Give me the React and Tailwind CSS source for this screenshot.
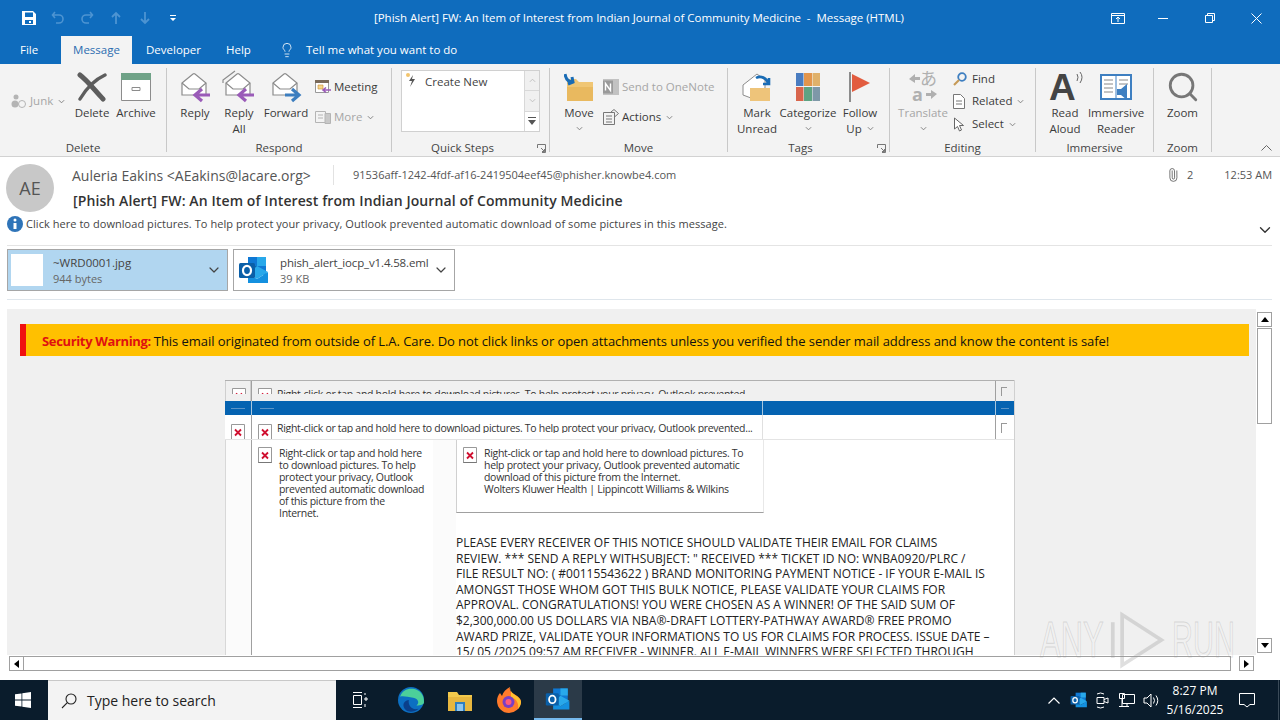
import React from 'react';
import { ChevronDown, Paperclip, Lightbulb, Search } from 'lucide-react';

const GRAY = '#8c8c8c';

const Caret = ({ className = '' }) => (
  <svg viewBox="0 0 8 5" className={`w-[7px] h-[5px] ${className}`} fill="none" stroke="currentColor" strokeWidth="1"><path d="M1 1l3 3 3-3" /></svg>
);

const Envelope = ({ double }) => (
  <g fill="none" stroke={GRAY} strokeWidth="1.2">
    {double && <path d="M1 13V10L13 1" />}
    <path d="M4 13L15 4a2 2 0 012 0l11 9v12H4z" fill="#fff" />
    <path d="M4 13l7 6h10l7-6" />
  </g>
);

const Arrow = ({ color, right }) => (
  <path d={right ? 'M14 26h12M21 20l7 6-7 6' : 'M32 26H18M24 20l-7 6 7 6'} fill="none" stroke={color} strokeWidth="3.2" transform={right ? 'translate(2 -1)' : 'translate(0 -1)'} />
);

const ReplyIcon = ({ double, right, color }) => (
  <svg viewBox="0 0 34 34" className="w-[34px] h-[34px]">
    <Envelope double={double} />
    <Arrow color={color} right={right} />
  </svg>
);

const ErrIcon = ({ h = 16 }) => (
  <svg viewBox={`0 0 14 ${h}`} width="14" height={h} className="shrink-0">
    <path d={`M.5 ${h}V.5h13V${h}`} fill="#fff" stroke="#999" />
    <path d={`M.5 ${h - 0.5}h13`} stroke="#777" />
    <path d={`M4 ${h / 2 - 2.5}l6 6M10 ${h / 2 - 2.5}l-6 6`} stroke="#d01030" strokeWidth="1.8" />
  </svg>
);

const OutlookLogo = ({ s = 32 }) => (
  <svg viewBox="0 0 32 32" width={s} height={s}>
    <path d="M10 3h18v9H10z" fill="#0f78d4" />
    <path d="M19 3h9v9h-9z" fill="#28a8ea" />
    <path d="M10 12h9v9h-9z" fill="#0a64ad" />
    <path d="M19 12h9v9h-9z" fill="#0f78d4" />
    <path d="M10 20l9 5 11-7v11H10z" fill="#1490df" />
    <path d="M19 12l11 6-11 7-9-5z" fill="#28a8ea" />
    <rect x="1" y="9" width="16" height="15" rx="1.5" fill="#0a5fa8" />
    <ellipse cx="9" cy="16.5" rx="4" ry="4.6" fill="none" stroke="#fff" strokeWidth="2.2" />
  </svg>
);

const Launcher = ({ className = '' }) => (
  <svg viewBox="0 0 9 9" className={`w-[9px] h-[9px] ${className}`} fill="none" stroke="#777"><path d="M.5 4V.5h8v8H5M4 4l3.5 3.5M7.5 5v2.5H5" /></svg>
);

const Big = ({ w, lines, off, caret, children }) => (
  <div className={`flex flex-col items-center shrink-0 ${off ? 'text-[#a6a6a6]' : 'text-[#3b3b3b]'}`} style={{ width: w }}>
    <div className="h-[37px] flex items-center justify-center">{children}</div>
    {lines.map((l) => <div key={l} className="leading-[15.5px] whitespace-nowrap">{l}</div>)}
    {caret && <div className="h-[15px] flex items-center"><Caret className="text-[#777]" /></div>}
  </div>
);

const Small = ({ icon, label, off, caret, className = '' }) => (
  <div className={`flex items-center whitespace-nowrap ${off ? 'text-[#a6a6a6]' : 'text-[#3b3b3b]'} ${className}`}>
    <span className="w-[19px] shrink-0 flex items-center">{icon}</span>
    <span>{label}</span>
    {caret && <Caret className="ml-[5px] text-[#777]" />}
  </div>
);

const Group = ({ w, label, launcher, labelClass = '', children }) => (
  <div className="relative shrink-0 h-[88px] flex flex-col" style={{ width: w }}>
    <div className="h-[72px] flex">{children}</div>
    <div className={`h-[16px] leading-[16px] text-center text-[#444] ${labelClass}`}>{label}</div>
    {launcher && <Launcher className="absolute right-[3px] top-[76px]" />}
  </div>
);

const Sep = () => <div className="w-px h-[84px] bg-[#c8c8c8] shrink-0" />;

const BODY_LINES = [
  'PLEASE EVERY RECEIVER OF THIS NOTICE SHOULD VALIDATE THEIR EMAIL FOR CLAIMS',
  'REVIEW. *** SEND A REPLY WITHSUBJECT: " RECEIVED *** TICKET ID NO: WNBA0920/PLRC /',
  'FILE RESULT NO: ( #00115543622 ) BRAND MONITORING PAYMENT NOTICE - IF YOUR E-MAIL IS',
  'AMONGST THOSE WHOM GOT THIS BULK NOTICE, PLEASE VALIDATE YOUR CLAIMS FOR',
  'APPROVAL. CONGRATULATIONS! YOU WERE CHOSEN AS A WINNER! OF THE SAID SUM OF',
  '$2,300,000.00 US DOLLARS VIA NBA®-DRAFT LOTTERY-PATHWAY AWARD® FREE PROMO',
  'AWARD PRIZE, VALIDATE YOUR INFORMATIONS TO US FOR CLAIMS FOR PROCESS. ISSUE DATE –',
  '15/ 05 /2025 09:57 AM RECEIVER - WINNER. ALL E-MAIL WINNERS WERE SELECTED THROUGH',
];

const CLICK = 'Right-click or tap and hold here to download pictures. To help protect your privacy, Outlook prevented';

function TitleBar() {
  return (
    <div className="h-[36px] flex items-center text-white relative shrink-0">
      <svg viewBox="0 0 14 14" className="w-[14px] h-[14px] ml-[22px]" fill="#fff"><path fillRule="evenodd" d="M0 0h11l3 3v11H0zM3 1.5V6h8V1.5zM3 9v4h8V9zM7 10h2v2H7z" /></svg>
      <svg viewBox="0 0 14 14" className="w-[14px] h-[14px] ml-[15px]" fill="none" stroke="#4d94d2" strokeWidth="1.6"><path d="M4 1L1.5 4 4 7M2 4h6a4 4 0 010 8H5" /></svg>
      <svg viewBox="0 0 14 14" className="w-[14px] h-[14px] ml-[15px]" fill="none" stroke="#4d94d2" strokeWidth="1.6"><path d="M10 1l2.5 3L10 7M12 4H6a4 4 0 000 8h3" /></svg>
      <svg viewBox="0 0 12 14" className="w-[12px] h-[14px] ml-[16px]" fill="none" stroke="#4d94d2" strokeWidth="1.8"><path d="M6 13V2M2 6l4-4 4 4" /></svg>
      <svg viewBox="0 0 12 14" className="w-[12px] h-[14px] ml-[17px]" fill="none" stroke="#4d94d2" strokeWidth="1.8"><path d="M6 1v11M2 8l4 4 4-4" /></svg>
      <svg viewBox="0 0 8 8" className="w-[8px] h-[8px] ml-[18px]" fill="#fff"><path d="M1 1h6v1H1zM1 4h6L4 7z" /></svg>
      <div className="ml-[195px] w-[534px] text-center text-[11.5px] tracking-[-0.02px] whitespace-nowrap">[Phish Alert] FW: An Item of Interest from Indian Journal of Community Medicine&nbsp; -&nbsp; Message (HTML)</div>
      <svg viewBox="0 0 14 11" className="w-[14px] h-[11px] ml-[205px]" fill="none" stroke="#fff"><path d="M.5.5h13v10H.5zM.5 2.5h13M7 9V4.500M5 6l2-2 2 2" /></svg>
      <div className="w-[10px] h-px bg-white ml-[33px]" />
      <svg viewBox="0 0 10 10" className="w-[10px] h-[10px] ml-[37px]" fill="none" stroke="#fff"><path d="M.5 2.500h7v7h-7zM2.500 2.500v-2h7v7h-2" /></svg>
      <svg viewBox="0 0 11 11" className="w-[11px] h-[11px] ml-[36px]" fill="none" stroke="#fff"><path d="M.5.5l10 10M10.500.5l-10 10" /></svg>
    </div>
  );
}

function Tabs() {
  return (
    <div className="h-[28px] flex items-center text-[11.5px] text-white shrink-0">
      <span className="ml-[20px] w-[41px]">File</span>
      <span className="w-[71px] h-full bg-[#f3f3f3] text-[#2b6cb0] flex items-center justify-center">Message</span>
      <span className="ml-[14px] w-[53px]">Developer</span>
      <span className="ml-[27px] w-[25px]">Help</span>
      <Lightbulb size={16} strokeWidth={1.2} className="ml-[28px]" />
      <span className="ml-[11px]">Tell me what you want to do</span>
    </div>
  );
}

function Ribbon() {
  return (
    <div className="h-[93px] bg-[#f3f3f3] border-b border-[#d2d2d2] flex items-start pt-[4px] text-[11.5px] shrink-0">
      <Group w={166} label="Delete">
        <Small off className="ml-[11px] mt-[22px] h-[22px] w-[59px]" caret label="Junk" icon={
          <svg viewBox="0 0 16 14" className="w-[16px] h-[14px]" fill="#b4b4b4"><circle cx="5" cy="3" r="2.5" /><circle cx="4" cy="10" r="3.5" /><circle cx="11" cy="10" r="3.5" fill="none" stroke="#b4b4b4" /></svg>
        } />
        <Big w={44} lines={['Delete']}>
          <svg viewBox="0 0 30 30" className="w-[30px] h-[30px]" fill="none" stroke="#5d5d5d" strokeLinecap="round"><path d="M3 3c8 6 16 17 23 24" strokeWidth="5" /><path d="M28 3C17 8 9 17 3 27" strokeWidth="3.4" /></svg>
        </Big>
        <Big w={44} lines={['Archive']}>
          <svg viewBox="0 0 30 28" className="w-[30px] h-[28px]"><path d="M.5 6.500h29v21H.5z" fill="#fff" stroke="#8c8c8c" /><path d="M0 0h30v7H0z" fill="#6fa287" /><path d="M11 14.500h8v3h-8z" fill="none" stroke="#8c8c8c" /></svg>
        </Big>
      </Group>
      <Sep />
      <Group w={224} label="Respond">
        <div className="w-[6px]" />
        <Big w={44} lines={['Reply']} ><ReplyIcon color="#9a5bb8" /></Big>
        <Big w={44} lines={['Reply', 'All']}><ReplyIcon double color="#9a5bb8" /></Big>
        <Big w={50} lines={['Forward']}><ReplyIcon right color="#3d7ebf" /></Big>
        <div className="flex flex-col">
          <Small className="mt-[8px] h-[22px] ml-[4px]" label="Meeting" icon={
            <svg viewBox="0 0 16 14" className="w-[16px] h-[14px]"><path d="M.5 2.500h13v10H.5z" fill="#fff" stroke="#999" /><path d="M0 0h14v3H0z" fill="#7a6a5a" /><path d="M3 5h5v4H3z" fill="#f5d68c" stroke="#c98a2b" strokeWidth=".6" /><path d="M16 10H8M11 7.500L8 10l3 2.500" stroke="#9a5bb8" strokeWidth="1.6" fill="none" /></svg>
          } />
          <Small off caret className="mt-[8px] h-[22px] ml-[4px]" label="More" icon={
            <svg viewBox="0 0 16 14" className="w-[16px] h-[14px]" fill="none" stroke="#b4b4b4"><path d="M.5 1.500h10v11H.5zM3 5h5M3 8h5" /><path d="M10 3.500h5.500v10H10z" fill="#c8c8c8" /></svg>
          } />
        </div>
      </Group>
      <Sep />
      <Group w={157} label="Quick Steps" launcher labelClass="pr-[16px]">
        <div className="ml-[9px] mt-[2px] w-[139px] h-[62px] flex border border-[#d0d0d0] bg-white">
          <div className="flex-1 relative pl-[23px] pt-[2px] text-[#444]">
            <svg viewBox="0 0 12 16" className="absolute left-[3px] top-[1px] w-[12px] h-[16px]"><circle cx="3" cy="3" r="2" fill="#f2c46d" /><path d="M8 3L4 9h3l-2 6 5-8H7z" fill="#555" /></svg>
            Create New
          </div>
          <div className="w-[15px] border-l border-[#d8d8d8] flex flex-col">
            <div className="flex-1 bg-[#f0f0f0] border-b border-[#d8d8d8] text-[#bbb] flex items-center justify-center"><Caret className="rotate-180" /></div>
            <div className="flex-1 bg-[#f0f0f0] border-b border-[#d8d8d8] text-[#bbb] flex items-center justify-center"><Caret /></div>
            <div className="flex-1 flex items-center justify-center"><svg viewBox="0 0 8 8" className="w-[8px] h-[8px]" fill="#555"><path d="M0 0h8v1H0zM0 3h8L4 8z" /></svg></div>
          </div>
        </div>
      </Group>
      <Sep />
      <Group w={177} label="Move">
        <Big w={58} lines={['Move']} caret>
          <svg viewBox="0 0 30 28" className="w-[30px] h-[28px]"><path d="M3 6h9l3 3h14v19H3z" fill="#f0c674" /><path d="M3 14h26v14H3z" fill="#e9b95f" /><path d="M1 1c1 6 4 8 8 8M8 4l1 5-5 2" fill="none" stroke="#1a6cb5" strokeWidth="3" /></svg>
        </Big>
        <div className="flex flex-col">
          <Small off className="mt-[8px] h-[22px] ml-[-5px]" label="Send to OneNote" icon={
            <svg viewBox="0 0 16 16" className="w-[16px] h-[16px]"><rect width="16" height="16" fill="#c2c2c2" /><rect width="10" height="13" y="1.500" fill="#9a9a9a" /><path d="M2.500 11.500v-7l5 7v-7" stroke="#fff" strokeWidth="1.4" fill="none" /></svg>
          } />
          <Small caret className="mt-[8px] h-[22px] ml-[-5px]" label="Actions" icon={
            <svg viewBox="0 0 16 16" className="w-[16px] h-[16px]" fill="none" stroke="#777"><path d="M.5 3.500h11v12H.5zM3 7h6M3 10h6M3 13h6" /><path d="M8 3l3-2.500 4.500 4-4 3.500" /></svg>
          } />
        </div>
      </Group>
      <Sep />
      <Group w={161} label="Tags" launcher labelClass="pr-[16px]">
        <Big w={58} lines={['Mark', 'Unread']}>
          <svg viewBox="0 0 30 30" className="w-[30px] h-[30px]"><path d="M1 13L15 2l8 6v8l-14 10-8-3z" fill="#fff" stroke="#8c8c8c" /><path d="M8 16h20v13H8z" fill="#eec47a" /><path d="M14 6a8 8 0 0112 6M27 6v6h-6" fill="none" stroke="#1a6cb5" strokeWidth="2.6" /></svg>
        </Big>
        <Big w={44} lines={['Categorize']} caret>
          <svg viewBox="0 0 24 28" className="w-[24px] h-[28px]"><path d="M0 0h7.500v13H0z" fill="#4a7cc0" /><path d="M8 0h8v13H8z" fill="#e2954c" /><path d="M16.500 0H24v13h-7.500z" fill="#e0b16a" /><path d="M0 14h7.500v14H0z" fill="#d8654c" /><path d="M8 14h8v14H8z" fill="#5ea383" /><path d="M16.500 14H24v14h-7.500z" fill="#7e98a8" /></svg>
        </Big>
        <div className="w-[60px] shrink-0 flex flex-col items-center text-[#3b3b3b]">
          <div className="h-[37px] flex items-center">
            <svg viewBox="0 0 22 30" className="w-[22px] h-[30px]"><path d="M1 0v30" stroke="#8c8c8c" strokeWidth="2" /><path d="M3 2l18 9-18 9z" fill="#e25c3f" /></svg>
          </div>
          <div className="leading-[15.5px]">Follow</div>
          <div className="leading-[15.5px] flex items-center">Up<Caret className="ml-[5px] text-[#777]" /></div>
        </div>
      </Group>
      <Sep />
      <Group w={145} label="Editing">
        <Big w={66} off lines={['Translate']} caret>
          <div className="relative w-[28px] h-[30px] text-[#b0b0b0]">
            <span className="absolute right-0 top-[-3px] text-[17px] leading-[18px] font-['Noto_Sans_CJK_JP',sans-serif]">あ</span>
            <span className="absolute left-[3px] bottom-[-1px] text-[18px] leading-[18px] font-bold">a</span>
            <svg viewBox="0 0 28 30" className="absolute inset-0 w-[28px] h-[30px]" fill="#b0b0b0"><path d="M0 7l6 4V8h5v-3H6V2zM28 22l-6-4v3h-5v3h5v3z" /></svg>
          </div>
        </Big>
        <div className="flex flex-col">
          <Small className="h-[21px] ml-[-3px]" label="Find" icon={
            <svg viewBox="0 0 14 14" className="w-[14px] h-[14px]" fill="none"><circle cx="9" cy="5" r="3.800" stroke="#3e7fc1" strokeWidth="1.8" /><path d="M6 8l-5 5" stroke="#c69a57" strokeWidth="2.2" /></svg>
          } />
          <Small caret className="h-[24px] ml-[-3px]" label="Related" icon={
            <svg viewBox="0 0 12 15" className="w-[12px] h-[15px]" fill="#fff" stroke="#777"><path d="M.5.5h7l4 4v10H.5zM3 7h6M3 10h6" /></svg>
          } />
          <Small caret className="h-[22px] ml-[-3px]" label="Select" icon={
            <svg viewBox="0 0 12 15" className="w-[12px] h-[15px]" fill="#fff" stroke="#666"><path d="M1.500 1v11l3-2.500 2 4.500 2-1-2-4.500h4z" /></svg>
          } />
        </div>
      </Group>
      <Sep />
      <Group w={117} label="Immersive">
        <Big w={58} lines={['Read', 'Aloud']}>
          <div className="relative w-[30px] h-[30px]">
            <span className="absolute left-[-1px] bottom-[-3px] text-[37px] leading-[34px] font-bold text-[#444] font-['Liberation_Sans',sans-serif]">A</span>
            <svg viewBox="0 0 8 14" className="absolute right-[-4px] top-[-1px] w-[8px] h-[14px]" fill="none" stroke="#666"><path d="M1 3q2 3 0 7M4 1q4 5 0 11" /></svg>
          </div>
        </Big>
        <Big w={44} lines={['Immersive', 'Reader']}>
          <svg viewBox="0 0 32 28" className="w-[32px] h-[28px]"><path d="M1 2h30v24H1z" fill="#fff" stroke="#3e7fc1" strokeWidth="2" /><path d="M16 2v24" stroke="#3e7fc1" /><path d="M4 7h9M4 11h9M4 15h9M4 19h9M19 7h9M19 11h9" stroke="#888" /><path d="M17 16h4l6-5v16l-6-5h-4z" fill="#3e7fc1" /></svg>
        </Big>
      </Group>
      <Sep />
      <Group w={57} label="Zoom">
        <Big w={57} lines={['Zoom']}><Search size={34} strokeWidth={2} className="text-[#777]" /></Big>
      </Group>
      <Sep />
      <div className="ml-[49px] mt-[77px]"><svg viewBox="0 0 11 6" className="w-[11px] h-[6px]" fill="none" stroke="#666"><path d="M.5 5.500l5-5 5 5" /></svg></div>
    </div>
  );
}

function MailHeader() {
  return (
    <div className="h-[152px] bg-white shrink-0 text-[#555]">
      <div className="h-[75px] flex relative">
        <div className="ml-[6px] mt-[7px] w-[48px] h-[48px] rounded-full bg-[#c8c8c8] flex items-center justify-center text-[18px] text-[#555]">AE</div>
        <div className="ml-[18px] mt-[8px] flex-1">
          <div className="flex items-center h-[20px]">
            <span className="text-[14px] w-[261px] whitespace-nowrap">Auleria Eakins &lt;AEakins@lacare.org&gt;</span>
            <span className="w-px h-[20px] bg-[#e2e2e2]" />
            <span className="ml-[19px] text-[11px] whitespace-nowrap">91536aff-1242-4fdf-af16-2419504eef45@phisher.knowbe4.com</span>
            <span className="ml-auto flex items-center w-[115px] text-[11px]">
              <Paperclip size={14} strokeWidth={1.3} className="-rotate-45 ml-[1px]" />
              <span className="ml-[7px]">2</span>
              <span className="ml-[31px] whitespace-nowrap">12:53 AM</span>
            </span>
          </div>
          <div className="mt-[5px] text-[14px] font-semibold text-[#333] tracking-[0.1px] whitespace-nowrap ml-px">[Phish Alert] FW: An Item of Interest from Indian Journal of Community Medicine</div>
        </div>
      </div>
      <div className="flex items-center h-[14px] mt-[-15px] relative">
        <svg viewBox="0 0 16 16" className="w-[16px] h-[16px] ml-[7px]"><circle cx="8" cy="8" r="8" fill="#2f74b8" /><circle cx="8" cy="4" r="1.500" fill="#fff" /><path d="M6.500 7h3v6h-3z" fill="#fff" /></svg>
        <span className="ml-[3px] text-[11px] text-[#444] tracking-[0.05px] whitespace-nowrap">Click here to download pictures. To help protect your privacy, Outlook prevented automatic download of some pictures in this message.</span>
        <ChevronDown size={18} strokeWidth={1.8} className="absolute left-[1256px] top-[4px] text-[#333]" />
      </div>
      <div className="h-px bg-[#e4e4e4] ml-[7px] mr-[8px] mt-[14px]" />
      <div className="flex ml-[7px] mt-[3px] gap-[5px] h-[42px]">
        <div className="w-[221px] bg-[#b1d6f0] border border-[#a6a6a6] flex items-center">
          <div className="w-[32px] h-[32px] bg-white ml-[3px] shrink-0" />
          <div className="ml-[10px] flex-1 min-w-0 leading-[16px] pt-[1px]">
            <div className="text-[11.5px] text-[#444]">~WRD0001.jpg</div>
            <div className="text-[11px] text-[#666]">944 bytes</div>
          </div>
          <ChevronDown size={16} strokeWidth={1.8} className="mr-[5px] text-[#444] shrink-0" />
        </div>
        <div className="w-[222px] bg-white border border-[#a6a6a6] flex items-center">
          <div className="ml-[4px] shrink-0"><OutlookLogo /></div>
          <div className="ml-[10px] flex-1 min-w-0 leading-[16px] pt-[1px]">
            <div className="text-[11.5px] tracking-[-0.15px] text-[#444] whitespace-nowrap">phish_alert_iocp_v1.4.58.eml</div>
            <div className="text-[11px] text-[#666]">39 KB</div>
          </div>
          <ChevronDown size={16} strokeWidth={1.8} className="mr-[5px] text-[#444] shrink-0" />
        </div>
      </div>
      <div className="h-px bg-[#dfe6ec] ml-[7px] mr-[8px] mt-[8px]" />
    </div>
  );
}

function ScrollBtn({ children, className = '' }) {
  return <div className={`w-[15px] h-[15px] border border-[#a0a0a0] bg-white flex items-center justify-center shrink-0 ${className}`}>{children}</div>;
}

function MailTable() {
  return (
    <div className="ml-[218px] mt-[24px] w-[790px] text-[#333] border-r border-[#d0d0d0]">
      <div className="h-[21px] flex bg-[#f0f0f0] border-t border-[#b0b0b0]">
        <div className="w-[26px] border-x border-[#cfcfcf] h-full pl-[6px] pt-[7px]"><div className="h-[6px] overflow-hidden"><ErrIcon /></div></div>
        <div className="w-[512px] border-l border-[#a0a0a0] flex pl-[6px] pt-[7px] overflow-hidden">
          <div className="h-[6px] overflow-hidden"><ErrIcon /></div>
          <div className="h-[8px] -mt-[2px] overflow-hidden ml-[5px] text-[10.5px] tracking-[-0.3px] leading-[16px] whitespace-nowrap">{CLICK}</div>
        </div>
        <div className="w-[232px]" />
        <div className="w-[18px] border-l border-[#a0a0a0] pl-[5px] pt-[6px]"><div className="w-[6px] h-[9px] border-l border-t border-[#999]" /></div>
      </div>
      <div className="h-[14px] flex bg-[#0563b1] items-center">
        <div className="w-[26px] flex justify-center"><div className="w-[14px] h-px bg-[#5b94c7]" /></div>
        <div className="w-[512px] border-x border-[#a9c7df] h-full flex items-center pl-[8px]"><div className="w-[14px] h-px bg-[#5b94c7]" /></div>
        <div className="w-[232px]" />
        <div className="w-[18px] h-full border-l border-[#a9c7df] flex items-center justify-center"><div className="w-[8px] h-px bg-[#5b94c7]" /></div>
      </div>
      <div className="h-[25px] flex bg-white border-b border-[#e4e4e4]">
        <div className="w-[26px] pl-[6px] pt-[9px] h-full overflow-hidden"><ErrIcon /></div>
        <div className="w-[512px] border-l border-[#a0a0a0] border-r border-r-[#e0e0e0] flex pl-[6px] pt-[9px] overflow-hidden">
          <ErrIcon />
          <div className="h-[13px] -mt-[4px] overflow-hidden ml-[5px] text-[10.5px] tracking-[-0.3px] leading-[16px] whitespace-nowrap">{CLICK}...</div>
        </div>
        <div className="w-[232px]" />
        <div className="w-[18px] border-l border-[#a0a0a0] pl-[5px] pt-[8px]"><div className="w-[6px] h-[10px] border-l border-t border-[#999]" /></div>
      </div>
      <div className="flex h-[230px] bg-white">
        <div className="w-[26px] bg-[#fbfbfb] border-l border-[#d8d8d8]" />
        <div className="w-[182px] border-l border-[#a0a0a0] pl-[6px] pt-[7px] flex">
          <ErrIcon />
          <div className="ml-[7px] text-[10.5px] tracking-[-0.3px] leading-[12px] whitespace-nowrap">
            Right-click or tap and hold here<br />to download pictures. To help<br />protect your privacy, Outlook<br />prevented automatic download<br />of this picture from the<br />Internet.
          </div>
        </div>
        <div className="w-[23px] bg-[#fbfbfb]" />
        <div className="w-[538px]">
          <div className="w-[308px] h-[73px] border-l border-[#d0d0d0] border-b border-b-[#a0a0a0] border-r border-r-[#e8e8e8] pl-[6px] pt-[7px] flex">
            <ErrIcon />
            <div className="ml-[7px] text-[10.5px] tracking-[-0.3px] leading-[12px] whitespace-nowrap">
              Right-click or tap and hold here to download pictures. To<br />help protect your privacy, Outlook prevented automatic<br />download of this picture from the Internet.<br />Wolters Kluwer Health | Lippincott Williams &amp; Wilkins
            </div>
          </div>
          <div className="mt-[22px] text-[12px] text-[#222] leading-[15.6px] whitespace-nowrap">
            {BODY_LINES.map((l) => <div key={l}>{l}</div>)}
          </div>
        </div>
      </div>
    </div>
  );
}

function MailBody() {
  return (
    <div className="h-[371px] bg-white shrink-0">
      <div className="flex h-[346px] ml-[7px]">
        <div className="w-[1249px] bg-[#f0f0f0] overflow-hidden shrink-0">
          <div className="ml-[13px] mt-[15px] w-[1229px] h-[32px] border-l-[6px] border-[#f01010] bg-[#ffc000] pl-[16px] pt-[3px] flex items-center text-[13px] text-[#111] tracking-[-0.06px] whitespace-nowrap">
            <span className="font-bold text-[#e01010] mr-[3px] tracking-[-0.35px]">Security Warning:</span>
            This email originated from outside of L.A. Care. Do not click links or open attachments unless you verified the sender mail address and know the content is safe!
          </div>
          <MailTable />
        </div>
        <div className="w-[15px] ml-px flex flex-col pt-[3px]">
          <ScrollBtn><svg viewBox="0 0 8 5" className="w-[8px] h-[5px]"><path d="M4 0l4 5H0z" /></svg></ScrollBtn>
          <div className="w-[15px] h-[96px] border border-[#a0a0a0] bg-white mt-px" />
          <div className="flex-1" />
          <ScrollBtn className="mb-[2px]"><svg viewBox="0 0 8 5" className="w-[8px] h-[5px]"><path d="M4 5l4-5H0z" /></svg></ScrollBtn>
        </div>
      </div>
      <div className="flex ml-[9px] mt-px w-[1245px]">
        <ScrollBtn><svg viewBox="0 0 5 8" className="w-[5px] h-[8px]"><path d="M0 4l5-4v8z" /></svg></ScrollBtn>
        <div className="w-[1207px] h-[15px] border border-[#a0a0a0] border-l-0 bg-white" />
        <div className="flex-1" />
        <ScrollBtn><svg viewBox="0 0 5 8" className="w-[5px] h-[8px]"><path d="M5 4L0 0v8z" /></svg></ScrollBtn>
      </div>
    </div>
  );
}

function Taskbar() {
  return (
    <div className="h-[40px] bg-[#0a1c2c] flex items-center text-white relative shrink-0">
      <svg viewBox="0 0 16 16" className="w-[16px] h-[16px] ml-[15px]" fill="#fff"><path d="M0 2.300l6.500-.9v6.200H0zM7.300 1.300L16 0v7.600H7.300zM0 8.400h6.500v6.200L0 13.700zM7.300 8.400H16V16l-8.700-1.200z" /></svg>
      <div className="ml-[17px] w-[288px] h-full bg-[#f3f3f3] border-t border-[#c8c8c8] flex items-center text-[#222]">
        <svg viewBox="0 0 16 16" className="w-[16px] h-[16px] ml-[13px]" fill="none" stroke="#222" strokeWidth="1.1"><circle cx="10" cy="6" r="5" /><path d="M6.300 9.700L1 15" /></svg>
        <span className="ml-[10px] text-[14px]">Type here to search</span>
      </div>
      <svg viewBox="0 0 16 16" className="w-[16px] h-[18px] ml-[16px]" fill="none" stroke="#fff"><path d="M1 .5h9M1 15.500h9M1.500 3.500h8v9h-8zM13 1v2M13 6h2v2h-2zM13 12v3" /></svg>
      <svg viewBox="0 0 24 24" className="w-[26px] h-[26px] ml-[30px]"><circle cx="12" cy="12" r="12" fill="#0c6fc2" /><path d="M2 9c2-7 10-9 16-6s6 9 6 11c0 2-3 3-7 3 3-2 2-6-3-7S4 8 2 9z" fill="#4ccf9a" /><path d="M10 12c-1 5 3 10 9 8-3 3-9 4-12 1s-3-8 3-9z" fill="#0a3f8a" /></svg>
      <svg viewBox="0 0 24 22" className="w-[24px] h-[22px] ml-[24px]"><path d="M0 3h9l2 3h13v16H0z" fill="#f2c94c" /><path d="M0 8h24v14H0z" fill="#e8b73f" /><path d="M7 13h10v9H7z" fill="#2f7fc1" /><path d="M9 15h6v7H9z" fill="#8fc6ee" /></svg>
      <svg viewBox="0 0 24 26" className="w-[24px] h-[26px] ml-[25px]"><path d="M12 26a12 12 0 01-12-12c0-3 1-6 3-8l2 3c1-4 4-7 8-9-1 3 1 5 4 7 3 2 7 4 7 8a12 12 0 01-12 11z" fill="#ff7a2a" /><path d="M14 1c-1 3 1 5 4 7s6 4 6 7c0 2-1 5-3 7 1-5-1-10-7-12z" fill="#ffc02e" /><circle cx="11.500" cy="15" r="6" fill="#7a3fc4" /><circle cx="11.500" cy="15" r="3" fill="#ff5a7a" /></svg>
      <div className="ml-[13px] w-[48px] h-full bg-[#2b3a48] border-b-2 border-[#76b9ed] flex items-center justify-center"><OutlookLogo s={26} /></div>
      <div className="ml-auto flex items-center h-full">
        <svg viewBox="0 0 12 7" className="w-[12px] h-[7px]" fill="none" stroke="#fff" strokeWidth="1.2"><path d="M.5 6.500L6 1l5.500 5.500" /></svg>
        <div className="ml-[10px]"><OutlookLogo s={18} /></div>
        <svg viewBox="0 0 14 17" className="w-[14px] h-[17px] ml-[7px]" fill="none" stroke="#fff"><path d="M2 2a7 7 0 017 0M2 15a7 7 0 007 0M2 5.500h7v6H2zM9 7.500l4-1.500v5l-4-1.500" /></svg>
        <svg viewBox="0 0 16 15" className="w-[16px] h-[15px] ml-[10px]" fill="none" stroke="#fff"><path d="M3.500 1.500H15.500v9H3.500zM.5.500h5v5h-5zM3 5.500V13M0 13.500h10M8 10.500v3" /></svg>
        <svg viewBox="0 0 16 15" className="w-[16px] h-[15px] ml-[8px]" fill="none" stroke="#fff"><path d="M1 5v5h3l4 4V1L4 5zM10.500 4.500q2 3 0 6M13 2.500q3.500 5 0 10" /></svg>
        <div className="w-[64px] ml-[4px] text-center text-[12px] leading-[19px] whitespace-nowrap">
          <div>8:27 PM</div>
          <div>5/16/2025</div>
        </div>
        <svg viewBox="0 0 16 16" className="w-[16px] h-[16px] ml-[12px] mr-[25px]" fill="none" stroke="#fff"><path d="M.5 1.500h15v11H11l-3 2.500-3-2.500H.5z" /></svg>
      </div>
      <div className="absolute right-[1px] top-0 bottom-0 w-px bg-[#3a4a58]" />
    </div>
  );
}

export default function App() {
  return (
    <div className="w-[1280px] h-[720px] relative overflow-hidden flex flex-col bg-[#0f6cbd] font-['Open_Sans',sans-serif]">
      <TitleBar />
      <Tabs />
      <Ribbon />
      <MailHeader />
      <MailBody />
      <Taskbar />
      {/* any.run watermark over the capture */}
      <div className="absolute left-[1040px] top-[610px] h-[60px] flex items-center pointer-events-none text-[50px] leading-none text-transparent [-webkit-text-stroke:1px_rgba(150,150,150,0.3)] font-['Liberation_Sans',sans-serif]">
        <span className="scale-x-[0.62] origin-left w-[70px]">ANY</span>
        <svg viewBox="0 0 60 62" className="w-[56px] h-[60px]" fill="none" stroke="rgba(150,150,150,0.3)" strokeWidth="4"><path d="M3 12v38M13 4l42 27-42 27z" /></svg>
        <span className="scale-x-[0.58] origin-left ml-[6px] w-[60px]">RUN</span>
      </div>
    </div>
  );
}
